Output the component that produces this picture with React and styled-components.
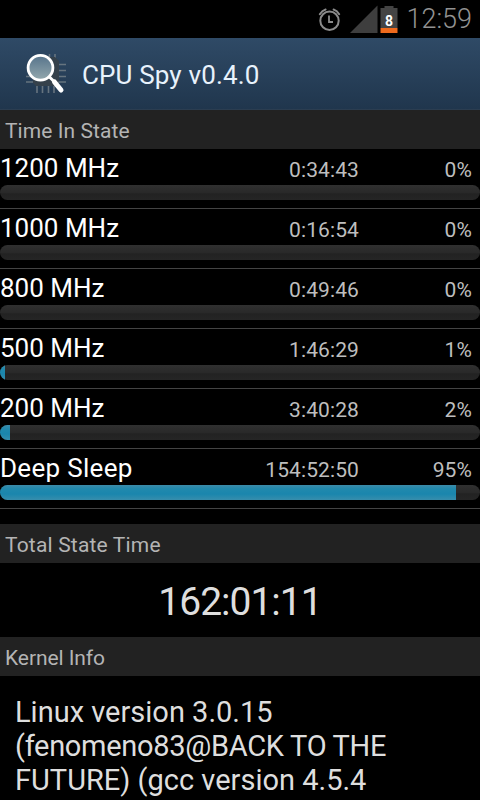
import React from "react";
import styled, { createGlobalStyle } from "styled-components";

const GlobalStyle = createGlobalStyle`
  html, body { margin: 0; background: #000; overflow: hidden; }
  * { box-sizing: border-box; }
`;

const Screen = styled.div`
  width: 480px;
  height: 800px;
  overflow: hidden;
  display: flex;
  flex-direction: column;
  background: #000;
  color: #fff;
  font-family: Roboto, "Liberation Sans", sans-serif;
  white-space: nowrap;
`;

const StatusBar = styled.header`
  flex: none;
  height: 38px;
  padding-right: 8px;
  display: flex;
  align-items: center;
  justify-content: flex-end;
`;

const Clock = styled.span`
  margin-left: 7px;
  color: #929292;
  font-size: 27px;
  line-height: 38px;
  font-weight: 300;
`;

const ActionBar = styled.div`
  flex: none;
  height: 72px;
  padding-left: 18px;
  display: flex;
  align-items: center;
  gap: 8px;
  background: linear-gradient(#2f4a66, #20364d);
  border-bottom: 1px solid #2b3d50;
`;

const Title = styled.h1`
  margin: 0;
  padding-top: 2px;
  color: #e8f2fc;
  font-size: 26px;
  font-weight: 400;
  line-height: 32px;
  letter-spacing: 0.14px;
`;

const SectionHeader = styled.h2`
  flex: none;
  margin: 0;
  height: 39px;
  padding: 3px 0 0 5px;
  background: #222;
  color: #b4b4b4;
  font-size: 21px;
  font-weight: 400;
  line-height: 36px;
  letter-spacing: ${(p) => p.$spacing}px;
`;

const StateList = styled.ul`
  flex: none;
  margin: 0 0 15px;
  padding: 0;
  list-style: none;
`;

const StateRow = styled.li`
  height: 60px;
  border-bottom: 1px solid #444;
`;

const StateLabels = styled.div`
  height: 36px;
  padding-right: 8px;
  display: grid;
  grid-template-columns: 200px 159px 1fr;
  align-items: baseline;
`;

const StateName = styled.span`
  font-size: 26px;
  line-height: 38px;
  letter-spacing: ${(p) => p.$spacing}px;
`;

const StateValue = styled.span`
  color: #bebebe;
  font-size: 21px;
  line-height: 30px;
  text-align: right;
  letter-spacing: 0.1px;
`;

const Track = styled.div`
  height: 15px;
  border-radius: 7.5px;
  overflow: hidden;
  background: linear-gradient(#303030, #292929 50%, #222 60%, #252525);
`;

const Fill = styled.div`
  width: ${(p) => p.$width}px;
  height: 100%;
  background: linear-gradient(#3d8ba9, #2189ad 25%, #1a86ad 60%, #378dac);
`;

const Total = styled.div`
  flex: none;
  height: 74px;
  padding-top: 2px;
  color: #dedede;
  font-size: 39px;
  line-height: 74px;
  text-align: center;
  letter-spacing: -1px;
`;

const KernelText = styled.p`
  margin: 0;
  padding: 19px 15px 0;
  color: #dedede;
  font-size: 29px;
  line-height: 34px;
`;

const KernelLine = styled.span`
  display: block;
  letter-spacing: ${(p) => p.$spacing}px;
`;

const StatusIcons = () => (
  <svg width="82" height="38" viewBox="317 0 82 38">
    <g fill="none" stroke="#8b8b8b" strokeLinecap="round">
      <circle cx="329.5" cy="20.8" r="9.2" strokeWidth="2" />
      <path d="M329 15.500v6.500h4" strokeWidth="1.800" strokeLinecap="butt" />
      <path d="M319.800 14.200q2.200-3.600 5.800-4.700M333.600 9.500q3.600 1.100 5.600 4.700" strokeWidth="2" />
    </g>
    <path d="M350 33L377.500 5.500V33z" fill="#3e3e3e" />
    <path d="M380.500 8h4V6h9v2h4v20h-17z" fill="#444" />
    <rect x="380.500" y="28" width="17" height="5" fill="#ee6a1d" />
    <text x="389" y="26" textAnchor="middle" fill="#fff" fontFamily="Roboto, sans-serif" fontSize="14" fontWeight="700">8</text>
  </svg>
);

const AppIcon = () => (
  <svg width="56" height="56" viewBox="18 46 56 56">
    <defs>
      <linearGradient id="lens" x1="0" y1="0" x2="0" y2="1">
        <stop offset="0" stopColor="#56738b" />
        <stop offset="1" stopColor="#93a8ad" />
      </linearGradient>
    </defs>
    <path d="M49.500 60v-6M55 60v-6M58 64.500h8M58 70.500h8M58 76.500h8M58 82h8M26 76.500h10M26 82h10M37 84v9M42.500 84v9M48.500 84v9M54 84v9" stroke="#66747f" strokeWidth="1.600" />
    <path d="M36 57h19l4 4v20l-5 5H36l-3-3V60z" fill="#35414b" />
    <circle cx="40.500" cy="67.700" r="12.400" fill="url(#lens)" stroke="#fff" strokeWidth="2.800" />
    <path d="M49.500 77l5 5" stroke="#fff" strokeWidth="3" />
    <path d="M54.500 82l6.500 8" stroke="#fff" strokeWidth="5" strokeLinecap="round" />
  </svg>
);

const states = [
  { name: "1200 MHz", time: "0:34:43", percent: "0%", width: 0, spacing: 0 },
  { name: "1000 MHz", time: "0:16:54", percent: "0%", width: 0, spacing: 0 },
  { name: "800 MHz", time: "0:49:46", percent: "0%", width: 0, spacing: 0 },
  { name: "500 MHz", time: "1:46:29", percent: "1%", width: 5, spacing: 0 },
  { name: "200 MHz", time: "3:40:28", percent: "2%", width: 10, spacing: 0 },
  { name: "Deep Sleep", time: "154:52:50", percent: "95%", width: 456, spacing: 0.3 },
];

export default function App() {
  return (
    <>
      <GlobalStyle />
      <Screen>
        <StatusBar>
          <StatusIcons />
          <Clock>12:59</Clock>
        </StatusBar>
        <ActionBar>
          <AppIcon />
          <Title>CPU Spy v0.4.0</Title>
        </ActionBar>
        <SectionHeader $spacing={0.08}>Time In State</SectionHeader>
        <StateList>
          {states.map((s) => (
            <StateRow key={s.name}>
              <StateLabels>
                <StateName $spacing={s.spacing}>{s.name}</StateName>
                <StateValue>{s.time}</StateValue>
                <StateValue>{s.percent}</StateValue>
              </StateLabels>
              <Track>
                <Fill $width={s.width} />
              </Track>
            </StateRow>
          ))}
        </StateList>
        <SectionHeader $spacing={0.18}>Total State Time</SectionHeader>
        <Total>162:01:11</Total>
        <SectionHeader $spacing={-0.08}>Kernel Info</SectionHeader>
        <KernelText>
          <KernelLine $spacing={0}>Linux version 3.0.15</KernelLine>
          <KernelLine $spacing={-0.3}>(fenomeno83@BACK TO THE</KernelLine>
          <KernelLine $spacing={0}>FUTURE) (gcc version 4.5.4</KernelLine>
        </KernelText>
      </Screen>
    </>
  );
}
